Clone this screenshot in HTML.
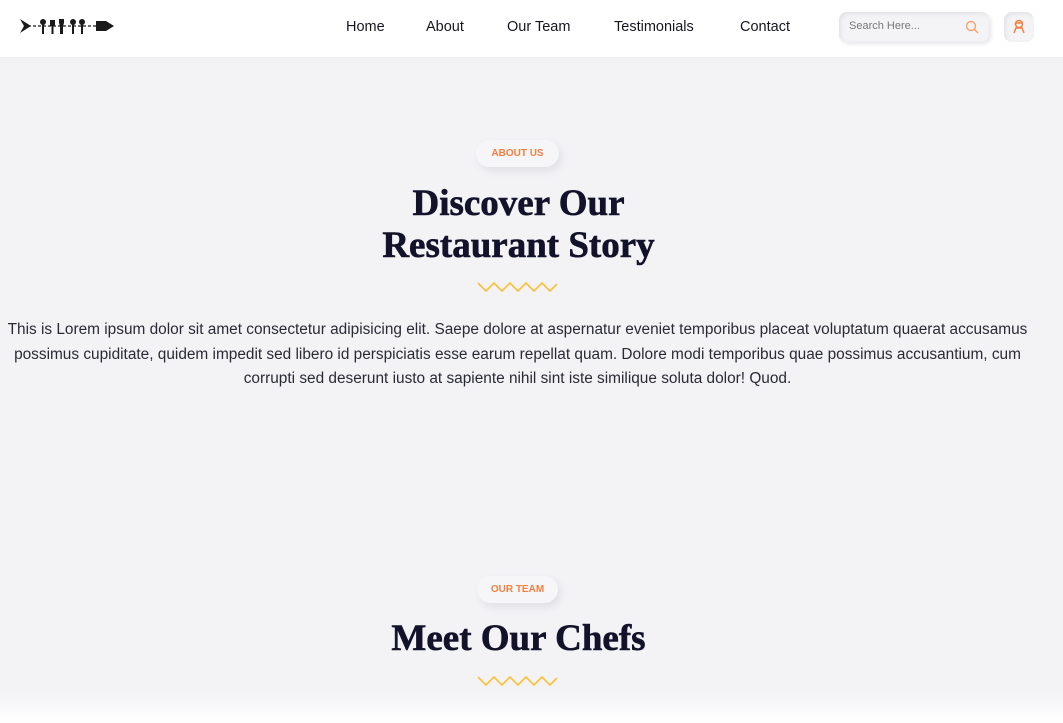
<!DOCTYPE html>
<html><head><meta charset="utf-8"><style>
*{margin:0;padding:0;box-sizing:border-box}
body{width:1063px;height:723px;overflow:hidden;background:#f3f3f6;font-family:"Liberation Sans",sans-serif;position:relative}
.nav{position:absolute;top:0;left:0;width:1063px;height:58px;background:#fff;border-bottom:1px solid #ececf0}
.nav a{position:absolute;top:19px;font-size:14.5px;color:#161623;text-decoration:none}
.search{position:absolute;left:839px;top:12px;width:150px;height:30px;border-radius:8px;background:#f4f4f6;box-shadow:inset 2px 2px 4px #e2e2e6,2px 2px 5px #e6e6ea;font-size:11px;color:#777;padding:8px 10px}
.ub{position:absolute;left:1004px;top:12px;width:30px;height:30px;border-radius:8px;background:#f4f4f6;box-shadow:inset 2px 2px 4px #e2e2e6}
.badge{position:absolute;height:27px;border-radius:14px;background:#f6f6f8;box-shadow:3px 4px 8px #e0e0e4;color:#f4803f;font-weight:bold;font-size:10px;text-align:center;line-height:27px}
h2{position:absolute;left:0;width:1037px;text-align:center;font-family:"Liberation Serif",serif;font-weight:bold;font-size:37px;color:#12122a;line-height:42px;-webkit-text-stroke:0.6px #12122a}
.zz{position:absolute;left:477px}
p{position:absolute;left:0;top:318px;width:1035px;text-align:center;font-size:15.4px;line-height:24.5px;color:#2a2a35;white-space:nowrap}
</style></head><body>
<div class="nav">
<svg style="position:absolute;left:20px;top:16px" width="94" height="20" viewBox="0 0 94 20">
<path d="M0 3 L11 10 L0 17 L4 10Z" fill="#1a1a1a"/>
<line x1="8" y1="10" x2="80" y2="10" stroke="#1a1a1a" stroke-width="1.2" stroke-dasharray="3 2"/>
<g fill="#1a1a1a"><circle cx="23" cy="6" r="3"/><rect x="22" y="6" width="2" height="12"/>
<rect x="30" y="4" width="5" height="6"/><rect x="31.5" y="8" width="2" height="10"/>
<path d="M39 3 h5 v4 l-1 3 v8 h-3 v-8 l-1-3z"/>
<circle cx="53" cy="6" r="3"/><rect x="52" y="6" width="2" height="12"/>
<circle cx="62" cy="6" r="3"/><rect x="61" y="6" width="2" height="12"/>
<path d="M76 5 h10 l8 5 -8 5 h-10z"/></g></svg>
<a style="left:346px">Home</a><a style="left:426px">About</a><a style="left:507px">Our Team</a><a style="left:614px">Testimonials</a><a style="left:740px">Contact</a>
<div class="search">Search Here...<svg style="position:absolute;right:10px;top:8px" width="14" height="14" viewBox="0 0 14 14" fill="none" stroke="#f6a070" stroke-width="1.4"><circle cx="6" cy="6" r="4.5"/><line x1="9.5" y1="9.5" x2="13" y2="13"/></svg></div>
<div class="ub"><svg style="position:absolute;left:8px;top:7px" width="14" height="16" viewBox="0 0 14 16" fill="none" stroke="#f4803f" stroke-width="1.5"><circle cx="7" cy="5" r="3.5"/><path d="M3 4h8M2 14l2-5h6l2 5"/></svg></div>
</div>
<div class="badge" style="left:476px;top:140px;width:83px">ABOUT US</div>
<h2 style="top:183px">Discover Our<br>Restaurant Story</h2>
<svg class="zz" style="top:281px" width="81" height="12" viewBox="0 0 81 12"><polyline points="1,2 9,10 17,2 25,10 33,2 41,10 49,2 57,10 65,2 73,10 80,3" fill="none" stroke="#f6c343" stroke-width="1.8"/></svg>
<p>This is Lorem ipsum dolor sit amet consectetur adipisicing elit. Saepe dolore at aspernatur eveniet temporibus placeat voluptatum quaerat accusamus<br>possimus cupiditate, quidem impedit sed libero id perspiciatis esse earum repellat quam. Dolore modi temporibus quae possimus accusantium, cum<br>corrupti sed deserunt iusto at sapiente nihil sint iste similique soluta dolor! Quod.</p>
<div class="badge" style="left:477px;top:576px;width:81px">OUR TEAM</div>
<h2 style="top:618px">Meet Our Chefs</h2>
<svg class="zz" style="top:675px" width="81" height="12" viewBox="0 0 81 12"><polyline points="1,2 9,10 17,2 25,10 33,2 41,10 49,2 57,10 65,2 73,10 80,3" fill="none" stroke="#f6c343" stroke-width="1.8"/></svg>
<div style="position:absolute;left:0;top:693px;width:1063px;height:30px;background:linear-gradient(#f3f3f6,#fff)"></div>
</body></html>
